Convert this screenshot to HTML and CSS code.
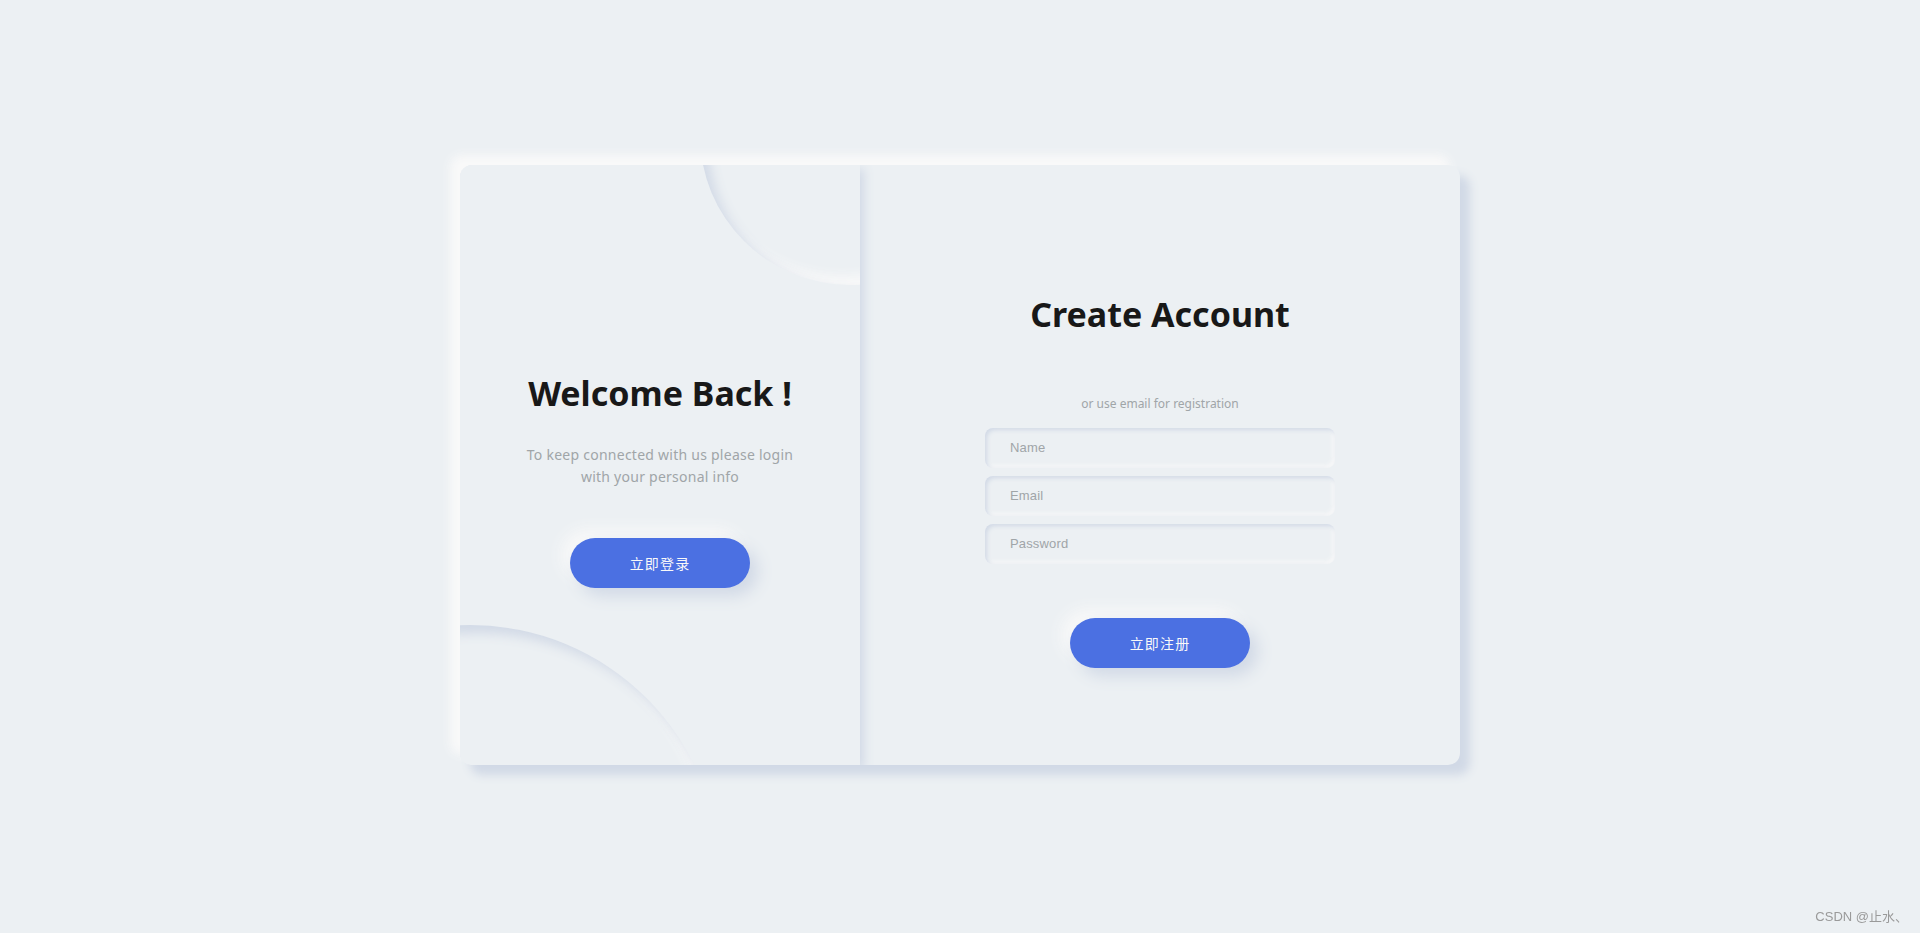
FILE: index.html
```html
<!DOCTYPE html>
<html lang="zh-CN">

<head>
    <meta charset="UTF-8">
    <meta name="viewport" content="width=device-width, initial-scale=1.0">
    <title>Login</title>
    <link rel="stylesheet" href="styles.css">
</head>

<body>
    <div class="container">
        <div class="switch">
            <div class="switch__circle"></div>
            <div class="switch__circle switch__circle--t"></div>
            <div class="switch__container">
                <h2 class="title">Welcome Back !</h2>
                <p class="description">To keep connected with us please login with your personal info</p>
                <button class="button">立即登录</button>
            </div>
        </div>
        <div class="form-panel">
            <form class="form" onsubmit="return false;">
                <h2 class="title">Create Account</h2>
                <span class="form__span">or use email for registration</span>
                <input class="form__input" type="text" placeholder="Name">
                <input class="form__input" type="text" placeholder="Email">
                <input class="form__input" type="password" placeholder="Password">
                <button class="button">立即注册</button>
            </form>
        </div>
    </div>
    <div class="watermark">CSDN @止水、</div>
</body>

</html>
```

FILE: styles.css
```css
* {
    box-sizing: border-box;
}

body {
    margin: 0;
    padding: 0 0 3px;
    height: 100vh;
    display: flex;
    justify-content: center;
    align-items: center;
    font-family: "Noto Sans", "Noto Sans CJK SC", sans-serif;
    background-color: #ecf0f3;
    color: #a0a5a8;
}

.container {
    width: 1000px;
    height: 600px;
    display: flex;
    background-color: #ecf0f3;
    border-radius: 12px;
    overflow: hidden;
    box-shadow: 10px 10px 10px #d1d9e6, -10px -10px 10px #f9f9f9;
}

.switch {
    position: relative;
    z-index: 2;
    width: 400px;
    height: 100%;
    flex-shrink: 0;
    overflow: hidden;
    background-color: #ecf0f3;
    box-shadow: 4px 4px 10px #d1d9e6;
}

.switch__circle {
    position: absolute;
    left: -240px;
    bottom: -360px;
    width: 500px;
    height: 500px;
    border-radius: 50%;
    background-color: #ecf0f3;
    box-shadow: inset 8px 8px 12px #d1d9e6, inset -8px -8px 12px #f9f9f9;
}

.switch__circle--t {
    top: -180px;
    left: 240px;
    bottom: auto;
    width: 300px;
    height: 300px;
}

.switch__container {
    position: relative;
    height: 100%;
    padding: 0 50px;
    display: flex;
    flex-direction: column;
    justify-content: center;
    align-items: center;
}

.form-panel {
    flex: 1;
    height: 100%;
    display: flex;
    justify-content: center;
    align-items: center;
}

.form {
    display: flex;
    flex-direction: column;
    align-items: center;
}

.title {
    margin: 0;
    font-size: 34px;
    font-weight: 700;
    line-height: 102px;
    color: #181818;
}

.description {
    margin: 0;
    width: 282px;
    font-size: 14px;
    letter-spacing: 0.25px;
    line-height: 1.6;
    text-align: center;
}

.form__span {
    margin-top: 30px;
    margin-bottom: 12px;
    font-size: 12px;
    line-height: 17px;
}

.form__input {
    width: 350px;
    height: 40px;
    margin: 4px 0;
    padding-left: 25px;
    font-family: "Liberation Sans", Arial, sans-serif;
    font-size: 13px;
    letter-spacing: 0.15px;
    border: none;
    outline: none;
    border-radius: 8px;
    background-color: #ecf0f3;
    box-shadow: inset 2px 2px 4px #d1d9e6, inset -2px -2px 4px #f9f9f9;
}

.form__input::placeholder {
    color: #a0a5a8;
}

.button {
    width: 180px;
    height: 50px;
    margin-top: 50px;
    border: none;
    outline: none;
    border-radius: 25px;
    font-family: "Noto Sans CJK SC", sans-serif;
    font-size: 14px;
    letter-spacing: 1.15px;
    color: #f9f9f9;
    background-color: #4b70e2;
    box-shadow: 8px 8px 16px #d1d9e6, -8px -8px 16px #f9f9f9;
    cursor: pointer;
}

.watermark {
    position: fixed;
    right: 12px;
    bottom: 8px;
    font-family: "Liberation Sans", "Noto Sans CJK SC", sans-serif;
    font-size: 13px;
    color: #9a9a9a;
}
```
